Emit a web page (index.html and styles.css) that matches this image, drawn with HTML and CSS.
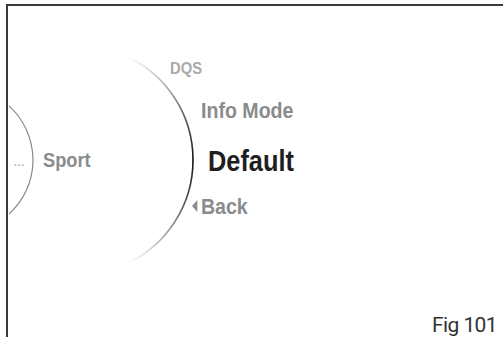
FILE: index.html
```html
<!DOCTYPE html>
<html lang="en">
<head>
  <meta charset="UTF-8" />
  <meta name="viewport" content="width=device-width, initial-scale=1.0" />
  <title>Fig 101 - Drive Mode Menu</title>
  <link rel="stylesheet" href="styles.css">
</head>
<body>
  <div class="screen">
    <div class="frame"></div>

    <svg class="rings" width="503" height="337" viewBox="0 0 503 337">
      <defs>
        <linearGradient id="fadeBig" x1="0" y1="56" x2="0" y2="264" gradientUnits="userSpaceOnUse">
          <stop offset="0" stop-color="#222" stop-opacity="0" />
          <stop offset="0.3" stop-color="#333" stop-opacity="0.8" />
          <stop offset="0.5" stop-color="#111" stop-opacity="1" />
          <stop offset="0.72" stop-color="#333" stop-opacity="0.8" />
          <stop offset="1" stop-color="#222" stop-opacity="0" />
        </linearGradient>
      </defs>
      <!-- outer ring, current level -->
      <path d="M 125.7 56 A 114 114 0 0 1 125.7 264" fill="none" stroke="url(#fadeBig)" stroke-width="1.6" />
      <!-- inner ring, previous level -->
      <path d="M 9 105.9 A 73 73 0 0 1 9 214.1" fill="none" stroke="#8a8a8a" stroke-width="1.2" />
    </svg>

    <span class="label more">...</span>
    <span class="label sport">Sport</span>

    <span class="label item dqs">DQS</span>
    <span class="label item info">Info Mode</span>
    <span class="label item current">Default</span>
    <span class="label item back">Back</span>

    <span class="fig">Fig 101</span>
  </div>
</body>
</html>
```

FILE: styles.css
```css
body {
  margin: 0;
  background: #ffffff;
  font-family: "Liberation Sans", Arial, sans-serif;
}
.screen {
  position: relative;
  width: 503px;
  height: 337px;
  overflow: hidden;
  background: #ffffff;
}
.frame {
  position: absolute;
  left: 6px;
  top: 4px;
  right: 0;
  bottom: 0;
  border-top: 2px solid #3a3a3a;
  border-left: 2px solid #3a3a3a;
}
.rings {
  position: absolute;
  left: 0;
  top: 0;
}
/* condensed look: the page has no narrow face, so squeeze the bold one */
.label {
  position: absolute;
  font-weight: 700;
  line-height: 1;
  white-space: nowrap;
  color: #8a8b8d;
  transform-origin: 0 50%;
}
.more {
  left: 14px;
  top: 158px;
  font-size: 10px;
  letter-spacing: 1px;
  color: #aaaaaa;
}
.sport {
  left: 43px;
  top: 149px;
  font-size: 21px;
  transform: scaleX(0.87);
}
.dqs {
  left: 170px;
  top: 60px;
  font-size: 17px;
  color: #a9aaac;
  transform: scaleX(0.87);
}
.info {
  left: 201px;
  top: 100px;
  font-size: 22px;
  transform: scaleX(0.89);
}
.current {
  left: 208px;
  top: 146px;
  font-size: 30px;
  color: #1e1e1e;
  transform: scaleX(0.845);
}
.back {
  left: 192px;
  top: 196px;
  font-size: 22px;
  padding-left: 10px;
  transform: scaleX(0.89);
}
.back::before {
  content: "";
  position: absolute;
  left: 0;
  top: 4px;
  border-top: 6px solid transparent;
  border-bottom: 6px solid transparent;
  border-right: 6px solid #8a8b8d;
}
.fig {
  position: absolute;
  right: 6px;
  top: 315px;
  font-family: Roboto, "Liberation Sans", sans-serif;
  font-size: 21px;
  line-height: 1;
  color: #333333;
  letter-spacing: -0.6px;
}
```
